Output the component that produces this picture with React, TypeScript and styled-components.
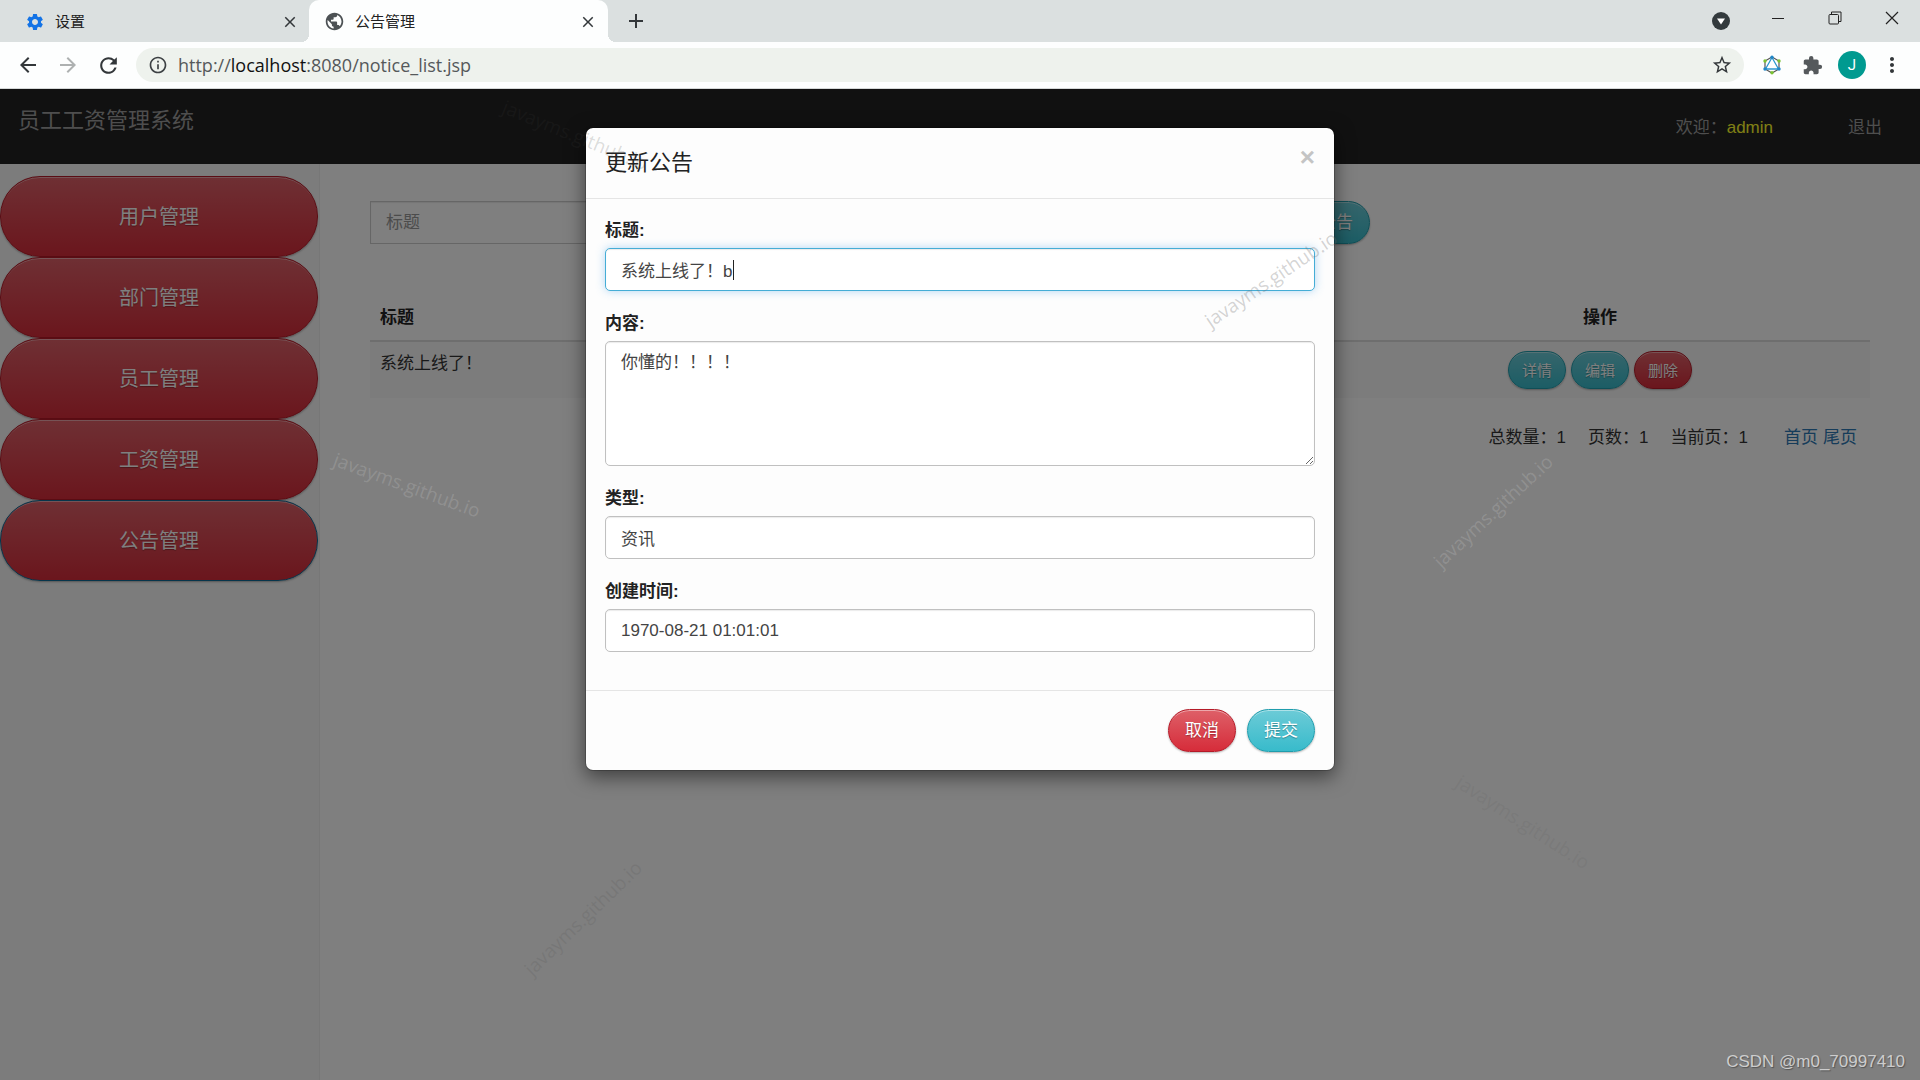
import React, { useState } from "react";
import styled, { createGlobalStyle, css } from "styled-components";
import {
  MdAdd,
  MdArrowBack,
  MdArrowForward,
  MdClose,
  MdExtension,
  MdInfoOutline,
  MdMoreVert,
  MdPublic,
  MdRefresh,
  MdSettings,
  MdStarBorder,
} from "react-icons/md";

const sans = '"Liberation Sans", "Noto Sans CJK SC", sans-serif';
const chromeSans = '"Open Sans", "Noto Sans CJK SC", sans-serif';

const GlobalStyle = createGlobalStyle`
  *, *::before, *::after { box-sizing: border-box; }
  body {
    margin: 0;
    font-family: ${sans};
    font-size: 17px;
    line-height: 25px;
    color: #333;
    background: #fff;
  }
  button, input, textarea { font: inherit; }
  button { cursor: pointer; }
`;

const Shell = styled.div`
  min-height: 100vh;
  display: flex;
  flex-direction: column;
  overflow: hidden;
`;

/* ---------- browser frame ---------- */

const TabStrip = styled.div`
  display: flex;
  height: 42px;
  background: #dbe0e0;
`;

const Tab = styled.div<{ $active?: boolean }>`
  position: relative;
  display: flex;
  align-items: center;
  gap: 10px;
  width: ${(p) => (p.$active ? 299 : 309)}px;
  padding: ${(p) => (p.$active ? "1px 10px 0 15px" : "1px 9px 0 25px")};
  font-family: ${chromeSans};
  font-size: 15px;
  color: #222;
  ${(p) =>
    p.$active &&
    css`
      background: #fdfefe;
      border-radius: 10px 10px 0 0;
      &::before,
      &::after {
        content: "";
        position: absolute;
        bottom: 0;
        width: 8px;
        height: 8px;
      }
      &::before {
        left: -8px;
        background: radial-gradient(circle at 0 0, transparent 8px, #fdfefe 8px);
      }
      &::after {
        right: -8px;
        background: radial-gradient(circle at 100% 0, transparent 8px, #fdfefe 8px);
      }
    `}
`;

const TabTitle = styled.span`
  flex: 1;
`;

const IconButton = styled.button<{ $width: number; $faded?: boolean }>`
  display: flex;
  align-items: center;
  justify-content: center;
  flex: none;
  width: ${(p) => p.$width}px;
  height: 36px;
  padding: 0;
  border: 0;
  background: none;
  color: ${(p) => (p.$faded ? "#aeb1b1" : "#33373a")};
`;

const NewTab = styled(IconButton)`
  align-self: center;
  margin-left: 16px;
`;

const WindowControls = styled.div`
  display: flex;
  margin-left: auto;
`;

const SearchTabs = styled(IconButton)`
  height: 42px;
`;

const Toolbar = styled.div`
  display: flex;
  align-items: center;
  height: 47px;
  padding: 0 8px;
  background: #fdfefe;
  border-bottom: 1px solid #d5d8d8;
`;

const AddressBar = styled.form`
  display: flex;
  align-items: center;
  flex: 1;
  height: 34px;
  margin: 0 8px;
  padding: 0 10px 0 12px;
  border-radius: 17px;
  background: #eef2ed;
  color: #3c4043;
`;

const Url = styled.span`
  flex: 1;
  margin-left: 10px;
  font-family: ${chromeSans};
  font-size: 18px;
  color: #55595b;
`;

const Host = styled.span`
  color: #111;
`;

const Avatar = styled.span`
  display: flex;
  align-items: center;
  justify-content: center;
  width: 28px;
  height: 28px;
  border-radius: 50%;
  background: #009a90;
  color: #fff;
  font-family: Roboto, sans-serif;
  font-size: 15px;
`;

/* ---------- page ---------- */

const Page = styled.div`
  position: relative;
  flex: 1;
  display: flex;
  flex-direction: column;
`;

const Navbar = styled.header`
  display: flex;
  align-items: flex-start;
  justify-content: space-between;
  height: 75px;
  padding: 19px 38px 18px 18px;
  background: #222;
`;

const Brand = styled.a`
  font-size: 22px;
  line-height: 25px;
  color: #9d9d9d;
  text-decoration: none;
`;

const UserMenu = styled.nav`
  display: flex;
  align-self: center;
  gap: 75px;
  color: #9d9d9d;
`;

const UserName = styled.span`
  color: #ffff2a;
`;

const LogoutLink = styled.a`
  color: inherit;
  text-decoration: none;
`;

const Columns = styled.div`
  flex: 1;
  display: flex;
`;

const Sidebar = styled.nav`
  display: flex;
  flex-direction: column;
  flex: 0 0 16.6667%;
  padding: 12px 1px 0 0;
  background: #f8f8f8;
  border-right: 1px solid #eee;
`;

const tones = {
  info: { top: "#6ccbd7", bottom: "#38bbcb", edge: "#1f9dad" },
  danger: { top: "#de6068", bottom: "#d62c3a", edge: "#b51a28" },
};

const glossy = css<{ $tone: keyof typeof tones }>`
  color: #fff;
  text-shadow: 0 1px 1px rgba(0, 0, 0, 0.3);
  border: 1px solid ${(p) => tones[p.$tone].edge};
  background: linear-gradient(
    ${(p) => tones[p.$tone].top},
    ${(p) => tones[p.$tone].bottom}
  );
  box-shadow: inset 0 2px 0 -1px rgba(255, 255, 255, 0.45),
    0 1px 2px rgba(0, 0, 0, 0.3);
`;

const SideLink = styled.a<{ $tone: keyof typeof tones; $current?: boolean }>`
  ${glossy}
  display: flex;
  align-items: center;
  justify-content: center;
  height: 81px;
  padding-top: 2px;
  border-radius: 40px;
  font-size: 20px;
  text-decoration: none;
  ${(p) => p.$current && "border-color: #0d6a96;"}
`;

const PillButton = styled.button<{ $tone: keyof typeof tones; $small?: boolean }>`
  ${glossy}
  flex: none;
  height: ${(p) => (p.$small ? 38 : 43)}px;
  padding: ${(p) => (p.$small ? "0 13px" : "0 16px")};
  border-radius: 22px;
  font-size: ${(p) => (p.$small ? 15 : 17)}px;
`;

const Content = styled.main`
  flex: 1;
  padding: 37px 50px;
  background: #fff;
`;

const SearchRow = styled.form`
  display: flex;
  gap: 5px;
  width: 66.6667%;
`;

const SearchInput = styled.input`
  flex: 1;
  min-width: 0;
  height: 43px;
  padding: 0 15px;
  border: 1px solid #ccc;
  background: #fff;
  box-shadow: inset 0 1px 1px rgba(0, 0, 0, 0.08);
  &::placeholder {
    color: #999;
    opacity: 1;
  }
`;

const NoticeTable = styled.table`
  width: 100%;
  margin-top: 51px;
  border-collapse: separate;
  border-spacing: 0;
`;

const HeadCell = styled.th<{ $actions?: boolean }>`
  padding: 10px;
  border-bottom: 2px solid #ddd;
  color: #222;
  text-align: ${(p) => (p.$actions ? "center" : "left")};
  ${(p) => p.$actions && "width: 36%;"}
`;

const Cell = styled.td`
  padding: 9px 10px;
  background: #f9f9f9;
  vertical-align: top;
`;

const RowActions = styled.div`
  display: flex;
  justify-content: center;
  gap: 5px;
`;

const Pager = styled.div`
  display: flex;
  justify-content: flex-end;
  gap: 22px;
  margin-top: 27px;
  padding-right: 13px;
`;

const PagerLinks = styled.span`
  display: flex;
  gap: 5px;
  margin-left: 14px;
`;

const PagerLink = styled.a`
  color: #2c78b4;
  text-decoration: none;
`;

/* ---------- dialog ---------- */

const Backdrop = styled.div`
  position: absolute;
  inset: 0;
  display: flex;
  align-items: flex-start;
  justify-content: center;
  padding-top: 38px;
  background: rgba(0, 0, 0, 0.5);
`;

const Dialog = styled.section`
  width: 750px;
  max-width: 100%;
  border: 1px solid rgba(0, 0, 0, 0.2);
  border-radius: 8px;
  background: #fdfdfd;
  background-clip: padding-box;
  box-shadow: 0 6px 19px rgba(0, 0, 0, 0.5);
`;

const DialogHeader = styled.header`
  display: flex;
  align-items: flex-start;
  justify-content: space-between;
  padding: 18px 19px;
  border-bottom: 1px solid #e5e5e5;
`;

const DialogTitle = styled.h4`
  margin: 0;
  font-size: 22px;
  font-weight: 400;
  line-height: 34px;
  color: #222;
`;

const CloseButton = styled.button`
  padding: 0;
  border: 0;
  background: none;
  font-size: 26px;
  font-weight: 700;
  line-height: 22px;
  color: #c4c4c4;
`;

const DialogBody = styled.div`
  display: flex;
  flex-direction: column;
  gap: 19px;
  padding: 18px 19px 38px;
`;

const FieldGroup = styled.div`
  display: flex;
  flex-direction: column;
  gap: 4px;
`;

const FieldLabel = styled.label`
  line-height: 27px;
  font-weight: 700;
  color: #222;
`;

const control = css<{ $focused?: boolean }>`
  display: block;
  width: 100%;
  border: 1px solid ${(p) => (p.$focused ? "#45add6" : "#c0c0c0")};
  border-radius: 5px;
  background: #fff;
  color: #444;
  outline: none;
  box-shadow: ${(p) =>
    p.$focused
      ? "inset 0 1px 1px rgba(0,0,0,.08), 0 0 10px rgba(82,168,236,.45)"
      : "inset 0 1px 1px rgba(0,0,0,.08)"};
`;

const TextInput = styled.input<{ $focused?: boolean }>`
  ${control}
  height: 43px;
  padding: 0 15px;
`;

const TextBox = styled.textarea`
  ${control}
  height: 125px;
  padding: 8px 15px;
  resize: vertical;
`;

const CaretHolder = styled.div`
  position: relative;
`;

const Caret = styled.span`
  position: absolute;
  top: 12px;
  left: 128px;
  width: 1px;
  height: 20px;
  background: #222;
`;

const DialogFooter = styled.footer`
  display: flex;
  justify-content: flex-end;
  gap: 11px;
  padding: 18px 19px;
  border-top: 1px solid #e5e5e5;
`;

/* ---------- watermarks ---------- */

const Mark = styled.span<{ $x: number; $y: number; $turn: number; $ink: string }>`
  position: absolute;
  left: ${(p) => p.$x}px;
  top: ${(p) => p.$y}px;
  transform: translate(-50%, -50%) rotate(${(p) => p.$turn}deg);
  font-family: ${chromeSans};
  font-size: 19px;
  line-height: 26px;
  white-space: nowrap;
  color: ${(p) => p.$ink};
  pointer-events: none;
`;

const Credit = styled.span`
  position: absolute;
  right: 15px;
  bottom: 6px;
  font-size: 17px;
  color: #cdcdcd;
  text-shadow: 1px 1px 1px #555;
`;

const marks = [
  { x: 575, y: 46, turn: 22, ink: "rgba(60,60,60,0.18)" },
  { x: 1271, y: 190, turn: -34, ink: "rgba(110,110,110,0.3)" },
  { x: 407, y: 396, turn: 20, ink: "rgba(255,255,255,0.15)" },
  { x: 1493, y: 422, turn: -43, ink: "rgba(255,255,255,0.15)" },
  { x: 583, y: 829, turn: -44, ink: "rgba(90,90,90,0.22)" },
  { x: 1523, y: 733, turn: 33, ink: "rgba(90,90,90,0.14)" },
];

const menu = ["用户管理", "部门管理", "员工管理", "工资管理", "公告管理"];

/* ---------- drawings ---------- */

const TabSearchIcon = () => (
  <svg width="18" height="18" viewBox="0 0 18 18" aria-hidden="true">
    <circle cx="9" cy="9" r="9" fill="#333a3d" />
    <path d="M5 6.500h8L9 12.500z" fill="#fff" />
  </svg>
);

const MinimizeIcon = () => (
  <svg width="14" height="14" viewBox="0 0 14 14" aria-hidden="true">
    <path d="M1 7.500h12" stroke="#222" strokeWidth="1" />
  </svg>
);

const RestoreIcon = () => (
  <svg width="14" height="14" viewBox="0 0 14 14" fill="none" stroke="#222" aria-hidden="true">
    <rect x="1" y="3.500" width="9.500" height="9.500" rx="1" />
    <path d="M3.500 3.500V1h9.500v9.500h-2.500" />
  </svg>
);

const WindowCloseIcon = () => (
  <svg width="14" height="14" viewBox="0 0 14 14" aria-hidden="true">
    <path d="M1 1l12 12M13 1L1 13" stroke="#222" strokeWidth="1.200" />
  </svg>
);

const HexIcon = () => (
  <svg width="20" height="20" viewBox="0 0 20 20" fill="none" aria-hidden="true">
    <path d="M10 2l7 4v8l-7 4-7-4V6z" stroke="#555" strokeWidth="1.200" />
    <path d="M10 2.500l6.500 11.500h-13z" stroke="#2b96cf" strokeWidth="1.300" />
    <g fill="#1f86c7">
      <circle cx="10" cy="2.200" r="1.700" />
      <circle cx="3" cy="14" r="1.700" />
      <circle cx="17" cy="14" r="1.700" />
    </g>
    <g fill="#7ac231">
      <circle cx="3" cy="6" r="1.700" />
      <circle cx="17" cy="6" r="1.700" />
      <circle cx="10" cy="17.800" r="1.700" />
    </g>
  </svg>
);

function BrowserFrame() {
  return (
    <>
      <TabStrip>
        <Tab>
          <MdSettings size={20} color="#1373e6" />
          <TabTitle>设置</TabTitle>
          <IconButton $width={20} aria-label="关闭标签页">
            <MdClose size={18} />
          </IconButton>
        </Tab>
        <Tab $active>
          <MdPublic size={21} color="#4c5154" />
          <TabTitle>公告管理</TabTitle>
          <IconButton $width={20} aria-label="关闭标签页">
            <MdClose size={18} />
          </IconButton>
        </Tab>
        <NewTab $width={24} aria-label="新标签页">
          <MdAdd size={24} />
        </NewTab>
        <WindowControls>
          <SearchTabs $width={56} aria-label="搜索标签页">
            <TabSearchIcon />
          </SearchTabs>
          <IconButton $width={57} aria-label="最小化">
            <MinimizeIcon />
          </IconButton>
          <IconButton $width={57} aria-label="还原">
            <RestoreIcon />
          </IconButton>
          <IconButton $width={57} aria-label="关闭">
            <WindowCloseIcon />
          </IconButton>
        </WindowControls>
      </TabStrip>
      <Toolbar>
        <IconButton $width={40} aria-label="后退">
          <MdArrowBack size={24} />
        </IconButton>
        <IconButton $width={40} $faded aria-label="前进">
          <MdArrowForward size={24} />
        </IconButton>
        <IconButton $width={40} aria-label="刷新">
          <MdRefresh size={25} />
        </IconButton>
        <AddressBar>
          <MdInfoOutline size={20} />
          <Url>
            http://<Host>localhost</Host>:8080/notice_list.jsp
          </Url>
          <IconButton type="button" $width={24} aria-label="收藏">
            <MdStarBorder size={22} />
          </IconButton>
        </AddressBar>
        <IconButton $width={40} aria-label="扩展图标">
          <HexIcon />
        </IconButton>
        <IconButton $width={40} aria-label="扩展程序">
          <MdExtension size={21} color="#55595c" />
        </IconButton>
        <IconButton $width={40} aria-label="账户">
          <Avatar>J</Avatar>
        </IconButton>
        <IconButton $width={40} aria-label="菜单">
          <MdMoreVert size={24} />
        </IconButton>
      </Toolbar>
    </>
  );
}

function NoticeList() {
  return (
    <Content>
      <SearchRow>
        <SearchInput placeholder="标题" aria-label="标题" />
        <PillButton type="button" $tone="info">
          添加公告
        </PillButton>
      </SearchRow>
      <NoticeTable>
        <thead>
          <tr>
            <HeadCell>标题</HeadCell>
            <HeadCell $actions>操作</HeadCell>
          </tr>
        </thead>
        <tbody>
          <tr>
            <Cell>系统上线了！</Cell>
            <Cell>
              <RowActions>
                <PillButton $tone="info" $small>
                  详情
                </PillButton>
                <PillButton $tone="info" $small>
                  编辑
                </PillButton>
                <PillButton $tone="danger" $small>
                  删除
                </PillButton>
              </RowActions>
            </Cell>
          </tr>
        </tbody>
      </NoticeTable>
      <Pager>
        <span>总数量：1</span>
        <span>页数：1</span>
        <span>当前页：1</span>
        <PagerLinks>
          <PagerLink href="#first">首页</PagerLink>
          <PagerLink href="#last">尾页</PagerLink>
        </PagerLinks>
      </Pager>
    </Content>
  );
}

function EditDialog() {
  const [title, setTitle] = useState("系统上线了！b");
  const [body, setBody] = useState("你懂的！！！！");
  const [kind, setKind] = useState("资讯");
  const [created, setCreated] = useState("1970-08-21 01:01:01");
  return (
    <Backdrop>
      <Dialog role="dialog" aria-labelledby="dialog-title">
        <DialogHeader>
          <DialogTitle id="dialog-title">更新公告</DialogTitle>
          <CloseButton aria-label="关闭">×</CloseButton>
        </DialogHeader>
        <DialogBody>
          <FieldGroup>
            <FieldLabel htmlFor="title">标题:</FieldLabel>
            <CaretHolder>
              <TextInput
                id="title"
                $focused
                value={title}
                onChange={(e) => setTitle(e.target.value)}
              />
              <Caret />
            </CaretHolder>
          </FieldGroup>
          <FieldGroup>
            <FieldLabel htmlFor="body">内容:</FieldLabel>
            <TextBox id="body" value={body} onChange={(e) => setBody(e.target.value)} />
          </FieldGroup>
          <FieldGroup>
            <FieldLabel htmlFor="kind">类型:</FieldLabel>
            <TextInput id="kind" value={kind} onChange={(e) => setKind(e.target.value)} />
          </FieldGroup>
          <FieldGroup>
            <FieldLabel htmlFor="created">创建时间:</FieldLabel>
            <TextInput
              id="created"
              value={created}
              onChange={(e) => setCreated(e.target.value)}
            />
          </FieldGroup>
        </DialogBody>
        <DialogFooter>
          <PillButton $tone="danger">取消</PillButton>
          <PillButton $tone="info">提交</PillButton>
        </DialogFooter>
      </Dialog>
    </Backdrop>
  );
}

export default function App() {
  return (
    <Shell>
      <GlobalStyle />
      <BrowserFrame />
      <Page>
        <Navbar>
          <Brand href="#home">员工工资管理系统</Brand>
          <UserMenu>
            <span>
              欢迎：<UserName>admin</UserName>
            </span>
            <LogoutLink href="#logout">退出</LogoutLink>
          </UserMenu>
        </Navbar>
        <Columns>
          <Sidebar>
            {menu.map((name, i) => (
              <SideLink key={name} href="#menu" $tone="danger" $current={i === menu.length - 1}>
                {name}
              </SideLink>
            ))}
          </Sidebar>
          <NoticeList />
        </Columns>
        <EditDialog />
        {marks.map((m) => (
          <Mark key={`${m.x}-${m.y}`} $x={m.x} $y={m.y} $turn={m.turn} $ink={m.ink}>
            javayms.github.io
          </Mark>
        ))}
        <Credit>CSDN @m0_70997410</Credit>
      </Page>
    </Shell>
  );
}
